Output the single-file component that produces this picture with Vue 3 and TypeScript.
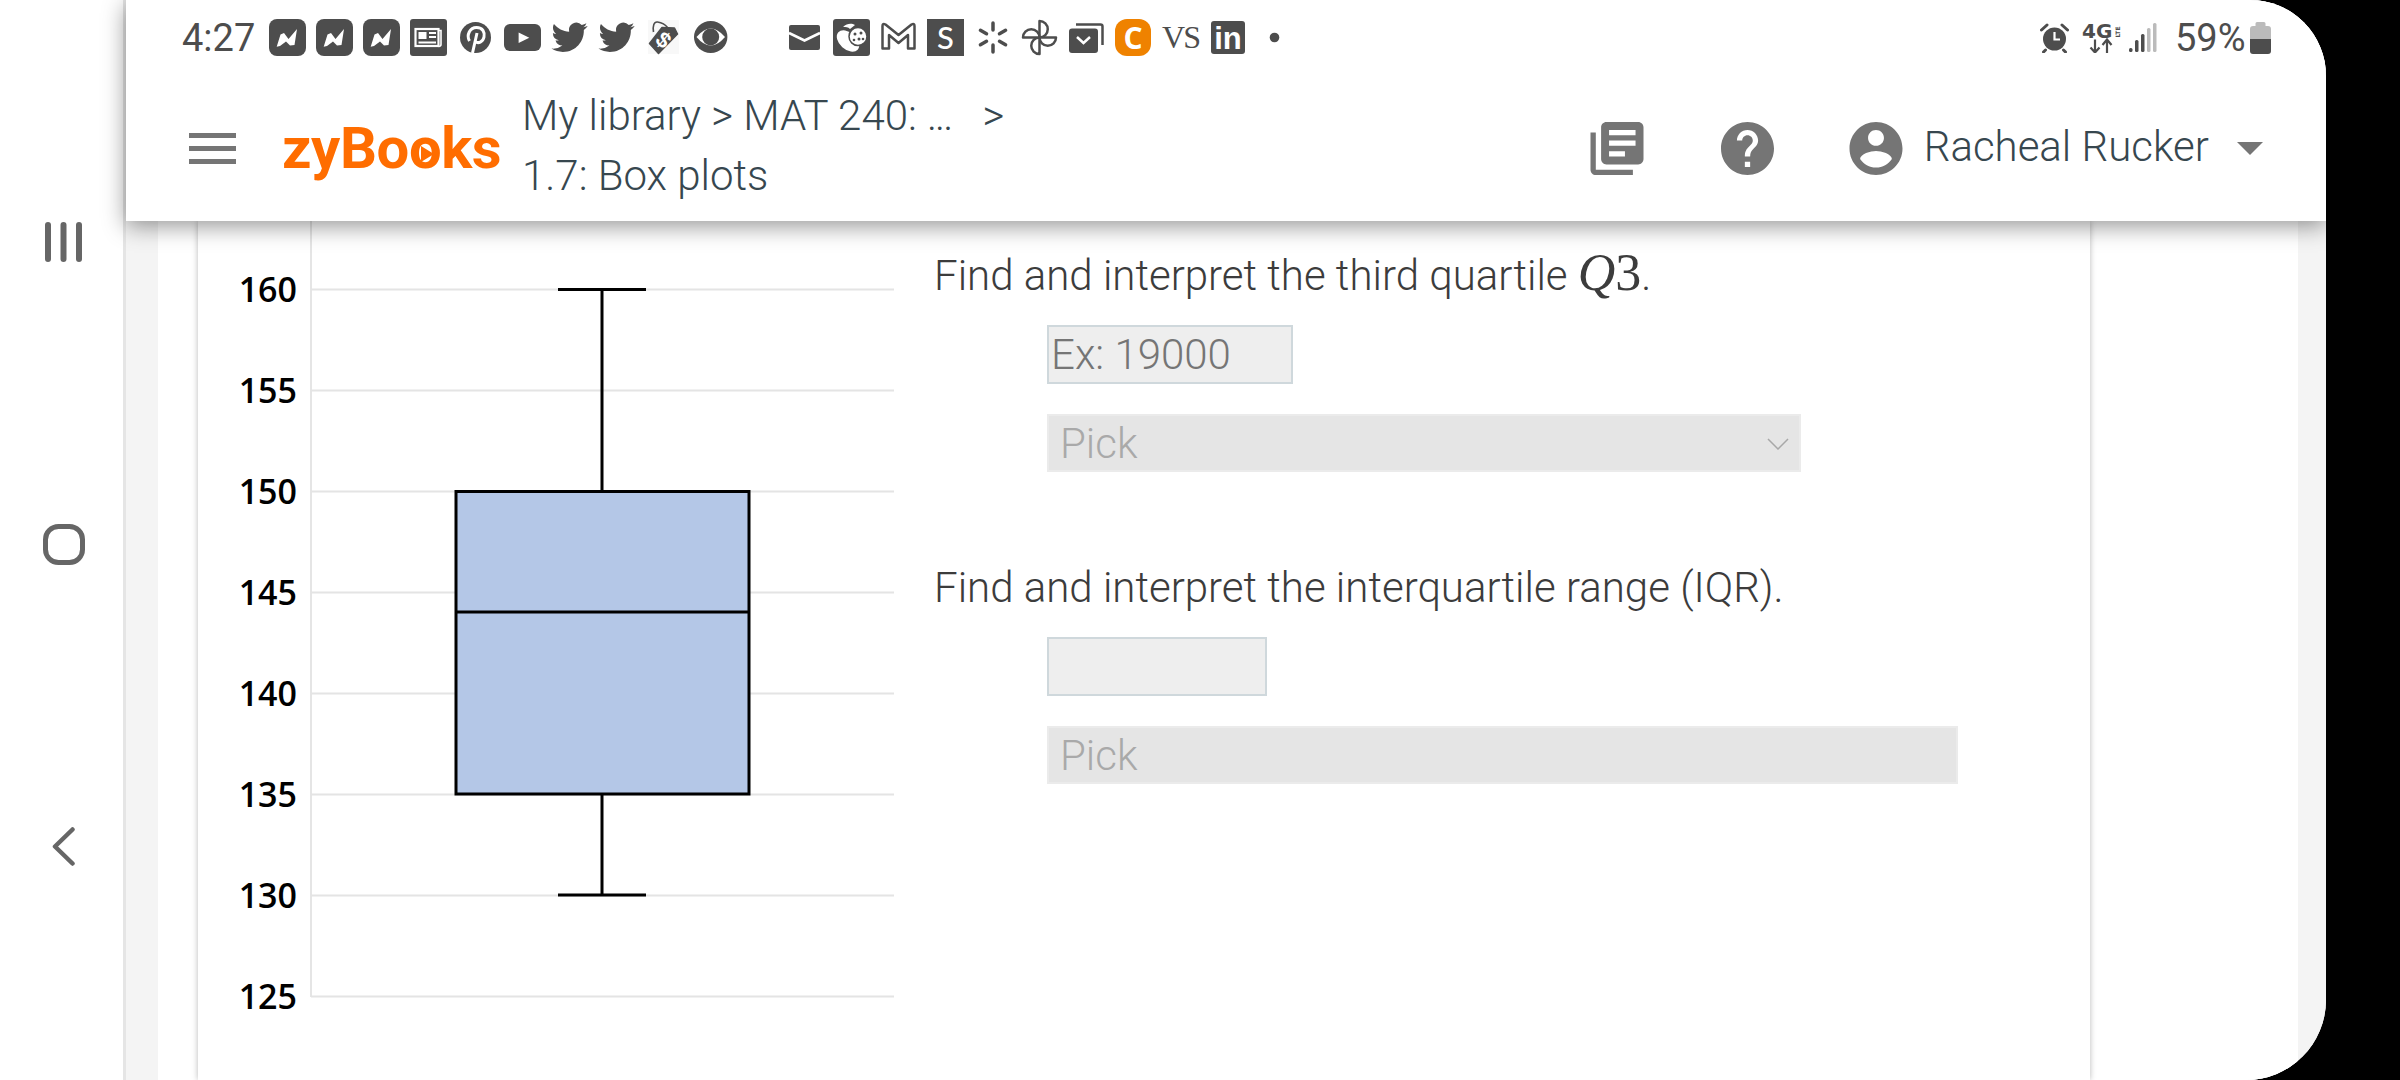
<script setup lang="ts">
// valores del eje y posicion vertical de cada linea de la grafica
const ticks = [160, 155, 150, 145, 140, 135, 130, 125].map((value, i) => ({
  value,
  y: 289.5 + i * 101,
}))

const sparkAngles = [0, 60, 120, 180, 240, 300]
const petalAngles = [0, 90, 180, 270]
const signalBars = [
  { x: 0, h: 4, on: true },
  { x: 6, h: 12, on: true },
  { x: 12, h: 18, on: true },
  { x: 18, h: 24, on: false },
  { x: 24, h: 29, on: false },
]
const twitterPath =
  'M23.953 4.57a10 10 0 01-2.825.775 4.958 4.958 0 002.163-2.723c-.951.555-2.005.959-3.127 1.184a4.92 4.92 0 00-8.384 4.482C7.69 8.095 4.067 6.13 1.64 3.162a4.822 4.822 0 00-.666 2.475c0 1.71.87 3.213 2.188 4.096a4.904 4.904 0 01-2.228-.616v.06a4.923 4.923 0 003.946 4.827 4.996 4.996 0 01-2.212.085 4.936 4.936 0 004.604 3.417 9.867 9.867 0 01-6.102 2.105c-.39 0-.779-.023-1.17-.067a13.995 13.995 0 007.557 2.209c9.053 0 13.998-7.496 13.998-13.985 0-.21 0-.42-.015-.63A9.935 9.935 0 0024 4.59z'
</script>

<template>
  <div class="device">
    <div class="screen">
      <!-- Barra de navegacion de Android -->
      <nav class="softkeys">
        <svg width="37" height="40" viewBox="0 0 37 40"><g fill="#666"><rect x="0" width="6" height="40" rx="3" /><rect x="15.5" width="6" height="40" rx="3" /><rect x="31" width="6" height="40" rx="3" /></g></svg>
        <svg width="42" height="41" viewBox="0 0 42 41"><rect x="2.5" y="2.5" width="37" height="36" rx="13" fill="none" stroke="#666" stroke-width="5" /></svg>
        <svg width="23" height="39" viewBox="0 0 23 39"><path d="M20.5 2.5 3 19.5 20.5 36.5" fill="none" stroke="#666" stroke-width="4.5" stroke-linecap="round" stroke-linejoin="round" /></svg>
      </nav>

      <main class="main">
        <header class="top">
          <div class="status">
            <span class="clock">4:27</span>
            <div class="notif">
              <svg v-for="n in 3" :key="n" class="slot" viewBox="0 0 47 47"><rect x="5" y="5" width="37" height="37" rx="8" /><polygon points="12.7,32.7 16.5,20.5 20,19 24.5,25 33,15 30.5,31 26,31.5 22,27.5 16,32" fill="#fff" /></svg>
              <svg class="slot" viewBox="0 0 47 47"><rect x="5" y="5" width="37" height="37" rx="3" /><rect x="10.5" y="15" width="23" height="17" fill="none" stroke="#fff" stroke-width="2.2" /><path d="M33.5 16.5h2.5v14q0 2-2.5 2" fill="none" stroke="#fff" stroke-width="1.6" /><rect x="13.5" y="18" width="8" height="7" fill="#fff" /><path d="M24 19h7M24 23h7M13.5 28.5h17.5" stroke="#fff" stroke-width="2" /></svg>
              <svg class="slot" viewBox="0 0 47 47"><circle cx="23.5" cy="23.5" r="15.5" /><path d="M17.5 27C14 21 18 13.5 24.5 13.5 31 13.5 33 18.5 32 23 31 28 26 30 23.5 27.5M25 19 20.5 39" fill="none" stroke="#fff" stroke-width="3" /></svg>
              <svg class="slot" viewBox="0 0 47 47"><rect x="5" y="10" width="37" height="27" rx="6" /><polygon points="19.6,18.5 30.3,23.7 19.6,29" fill="#fff" /></svg>
              <svg v-for="n in 2" :key="'tw' + n" class="slot" viewBox="0 0 47 47"><path :d="twitterPath" transform="translate(5.5 5.25) scale(1.5)" /></svg>
              <svg class="slot" viewBox="0 0 47 47"><rect x="8" y="6" width="31" height="34" fill="#f8f8f8" /><path d="M22 13.5 34.500 14 37.500 20 18.500 39.500 9.500 29.500Z" stroke="#4d4d4d" stroke-width="1.500" stroke-linejoin="round" /><path d="M13.500 18C12.500 12 14 7.500 17.500 8 21 8.500 25 10 27.500 13.500" fill="none" stroke="#4d4d4d" stroke-width="1.600" /><text x="22.500" y="33" class="tag-sign" transform="rotate(40 22.500 27)">$</text></svg>
              <svg class="slot" viewBox="0 0 47 47"><ellipse cx="23.7" cy="23" rx="16.7" ry="16" /><path d="M9.5 23Q23.7 6 38 23 23.7 40 9.5 23Z" fill="#fff" /><circle cx="23.7" cy="23" r="8.5" /></svg>
              <span class="slot"></span>
              <svg class="slot" viewBox="0 0 47 47"><rect x="8" y="11" width="31" height="25" rx="2" /><path d="M8 19 23.5 26.5 39 19" fill="none" stroke="#fff" stroke-width="2.5" /></svg>
              <svg class="slot" viewBox="0 0 47 47"><rect x="5" y="5" width="37" height="37" rx="3" /><ellipse cx="20" cy="27" rx="13" ry="8.5" transform="rotate(42 20 27)" fill="#fff" /><circle cx="30" cy="22.5" r="9" fill="#fff" stroke="#4d4d4d" stroke-width="1.5" /><g><circle cx="27" cy="20" r="1.5" /><circle cx="33" cy="19" r="1.5" /><circle cx="31" cy="25" r="1.5" /><circle cx="35" cy="25" r="1.3" /><circle cx="26" cy="26" r="1.3" /></g><path d="M15 13C19 9 24 9 27 11L22 15C20 13 18 13 15 13Z" fill="#fff" /></svg>
              <svg class="slot" viewBox="0 0 47 47"><path d="M7.5 34.5V12Q7.5 9 10.5 10.5L23.5 21 36.5 10.5Q39.5 9 39.5 12V34.5H33V21L23.5 29 14 21V34.5Z" fill="none" stroke="#4d4d4d" stroke-width="2.5" stroke-linejoin="round" /></svg>
              <svg class="slot" viewBox="0 0 47 47"><rect x="5" y="5" width="37" height="37" /><text x="23.5" y="35" class="s-letter">S</text></svg>
              <svg class="slot" viewBox="0 0 47 47"><line v-for="a in sparkAngles" :key="a" x1="24" y1="16" x2="24" y2="9" stroke="#4d4d4d" stroke-width="3.5" stroke-linecap="round" :transform="`rotate(${a} 24 23.5)`" /></svg>
              <svg class="slot" viewBox="0 0 47 47"><path v-for="a in petalAngles" :key="a" d="M23.5 23.5V7A8.25 8.25 0 0 1 23.5 23.5Z" fill="#fff" stroke="#4d4d4d" stroke-width="2.5" stroke-linejoin="round" :transform="`rotate(${a} 23.5 23.5)`" /></svg>
              <svg class="slot" viewBox="0 0 47 47"><path d="M13 10.5H37.5Q39.5 10.5 39.5 12.5V31" fill="none" stroke="#4d4d4d" stroke-width="2.5" /><rect x="6" y="14.5" width="29" height="24.5" rx="3" /><path d="M14 23 20.5 29 27 23" fill="none" stroke="#fff" stroke-width="2.5" /></svg>
              <svg class="slot" viewBox="0 0 47 47"><rect x="5" y="5" width="36" height="37" rx="12" fill="#ef8200" /><text x="23" y="35" class="c-letter">C</text></svg>
              <svg class="slot" viewBox="0 0 47 47"><text x="23.5" y="34" class="vs-letter">VS</text></svg>
              <svg class="slot" viewBox="0 0 47 47"><rect x="7" y="7" width="34" height="33" rx="3" /><text x="24" y="35" class="in-letter">in</text></svg>
              <svg class="slot" viewBox="0 0 47 47"><circle cx="23.5" cy="23.5" r="4.8" /></svg>
            </div>

            <div class="sys">
              <svg width="29" height="30" viewBox="0 0 29 30"><circle cx="14.5" cy="16" r="11.5" fill="#4d4d4d" /><path d="M14.5 9v7.5H20" fill="none" stroke="#fff" stroke-width="2.2" /><path d="M1.5 7 7 2M27.5 7 22 2M5.500 27 3.500 29M23.500 27 25.500 29" stroke="#4d4d4d" stroke-width="3" stroke-linecap="round" /></svg>
              <svg class="net" width="39" height="30" viewBox="0 0 39 30"><text x="0" y="15" class="net-4g">4G</text><text class="net-lte" transform="translate(38 14.5) rotate(-90)">LTE</text><path d="M13 16.5V29M8.5 24.5 13 29.5 17.5 24.5M25 30V17.5M20.5 22 25 16.5 29.5 22" fill="none" stroke="#4d4d4d" stroke-width="2.2" /></svg>
              <svg class="signal" width="28" height="29" viewBox="0 0 28 29"><rect v-for="b in signalBars" :key="b.x" :x="b.x" :y="29 - b.h" width="3.5" :height="b.h" rx="1.5" :fill="b.on ? '#4d4d4d' : '#bbb'" /></svg>
              <span class="battery-text">59%</span>
              <svg class="battery" width="21" height="32" viewBox="0 0 21 32"><path d="M5.5 1.5Q5.5 0 7 0H14Q15.5 0 15.5 1.5V4H18Q21 4 21 7V17H0V7Q0 4 3 4H5.5Z" fill="#bbb" /><path d="M0 17H21V29Q21 32 18 32H3Q0 32 0 29Z" fill="#4d4d4d" /></svg>
            </div>
          </div>

          <div class="toolbar">
            <svg class="burger" width="47" height="31" viewBox="0 0 47 31"><path d="M0 0H47V5H0ZM0 13H47V18H0ZM0 26H47V31H0Z" fill="#757575" /></svg>
            <div class="logo">zyBo<span class="play-o">o</span>ks</div>
            <div class="crumbs">
              <div>My library &gt; MAT 240: <span class="dots">...</span> <span class="crumb-sep">&gt;</span></div>
              <div>1.7: Box plots</div>
            </div>
            <div class="tools">
              <svg width="54" height="53" viewBox="2 2 20 20"><path fill="#757575" d="M4 6H2v14c0 1.1.9 2 2 2h14v-2H4V6zm16-4H8c-1.1 0-2 .9-2 2v12c0 1.1.9 2 2 2h12c1.1 0 2-.9 2-2V4c0-1.1-.9-2-2-2zm-1 9H9V9h10v2zm-4 4H9v-2h6v2zm4-8H9V5h10v2z" /></svg>
              <svg class="help" width="53" height="53" viewBox="2 2 20 20"><path fill="#757575" d="M12 2C6.48 2 2 6.48 2 12s4.48 10 10 10 10-4.48 10-10S17.52 2 12 2zm1 17h-2v-2h2v2zm2.07-7.75l-.9.92C13.45 12.9 13 13.5 13 15h-2v-.5c0-1.1.45-2.1 1.17-2.83l1.24-1.26c.37-.36.59-.86.59-1.41 0-1.1-.9-2-2-2s-2 .9-2 2H8c0-2.21 1.79-4 4-4s4 1.79 4 4c0 .88-.36 1.68-.93 2.25z" /></svg>
              <svg class="account" width="54" height="53" viewBox="2 2 20 20"><path fill="#757575" d="M12 2C6.48 2 2 6.48 2 12s4.48 10 10 10 10-4.48 10-10S17.52 2 12 2zm0 3c1.66 0 3 1.34 3 3s-1.34 3-3 3-3-1.34-3-3 1.34-3 3-3zm0 14.2c-2.5 0-4.71-1.28-6-3.22.03-1.99 4-3.08 6-3.08 1.99 0 5.97 1.09 6 3.08-1.29 1.94-3.5 3.22-6 3.22z" /></svg>
              <span class="user">Racheal Rucker</span>
              <svg class="caret" width="26" height="13" viewBox="0 0 26 13"><path d="M0 0H26L13 13Z" fill="#757575" /></svg>
            </div>
          </div>
        </header>

        <div class="page">
          <section class="card">
            <!-- Diagrama de caja -->
            <svg class="chart" width="700" height="859" viewBox="198 221 700 859">
              <line x1="311" y1="221" x2="311" y2="997" stroke="#dcdcdc" stroke-width="1.5" />
              <g v-for="t in ticks" :key="t.value">
                <line x1="311" :y1="t.y" x2="894" :y2="t.y" stroke="#e4e4e4" stroke-width="2" />
                <text x="297" :y="t.y + 12" class="tick">{{ t.value }}</text>
              </g>
              <g fill="none" stroke="#000" stroke-width="3">
                <path d="M558 289.5H646M602 289.5V491.5M602 794V895M558 895H646" />
                <rect x="456" y="491.5" width="293" height="302.5" fill="#b4c7e7" />
                <path d="M456 612H749" />
              </g>
            </svg>

            <div class="questions">
              <p class="prompt">Find and interpret the third quartile <span class="math"><i>Q</i>3</span>.</p>
              <input class="answer answer-wide" type="text" placeholder="Ex: 19000" disabled />
              <div class="pick pick-short">
                <select disabled><option>Pick</option></select>
                <svg class="chevron" width="22" height="12" viewBox="0 0 22 12"><path d="M1 1 11 11 21 1" fill="none" stroke="#a8a8a8" stroke-width="1.5" /></svg>
              </div>

              <p class="prompt prompt-next">Find and interpret the interquartile range (IQR).</p>
              <input class="answer answer-narrow" type="text" disabled />
              <div class="pick pick-long">
                <select disabled><option>Pick</option></select>
              </div>
            </div>
          </section>
        </div>
      </main>
    </div>
  </div>
</template>

<style>
body {
  background: #000;
}
</style>

<style scoped>
.device {
  width: 2400px;
  height: 1080px;
  background: #000;
  overflow: hidden;
  font-family: Roboto, "Liberation Sans", sans-serif;
}

.screen {
  width: 2326px;
  height: 1080px;
  display: flex;
  background: #fff;
  border-radius: 0 76px 80px 0;
  overflow: hidden;
}

/* barra lateral */
.softkeys {
  width: 119px;
  flex: none;
  border-right: 3px solid #e5e5e5;
  display: flex;
  flex-direction: column;
  align-items: center;
  padding: 222px 0 0 4px;
  gap: 262px;
  background: #fff;
}

.main {
  flex: 1;
  min-width: 0;
  display: flex;
  flex-direction: column;
  background: #f4f4f4;
}

.top {
  height: 221px;
  flex: none;
  background: #fff;
  position: relative;
  z-index: 2;
  box-shadow: 0 5px 22px rgba(0, 0, 0, 0.42);
}

/* barra de estado */
.status {
  height: 75px;
  display: flex;
  align-items: center;
  padding: 0 55px 0 56px;
}

.clock {
  font-size: 38px;
  color: #4d4d4d;
  width: 82px;
  flex: none;
}

.notif {
  display: flex;
  fill: #4d4d4d;
}

.slot {
  width: 47px;
  height: 47px;
  flex: none;
  display: block;
}

.tag-sign {
  font: 700 22px "Liberation Sans", sans-serif;
  fill: #fff;
  text-anchor: middle;
}

.s-letter {
  font: 500 31px Lato, sans-serif;
  fill: #fff;
  text-anchor: middle;
}

.c-letter {
  font: 700 30px "Open Sans", sans-serif;
  fill: #fff;
  text-anchor: middle;
}

.vs-letter {
  font: 400 32px "Liberation Serif", serif;
  text-anchor: middle;
  letter-spacing: -2px;
}

.in-letter {
  font: 700 31px "Liberation Sans", sans-serif;
  fill: #fff;
  text-anchor: middle;
}

.sys {
  margin-left: auto;
  display: flex;
  align-items: center;
}

.net {
  margin-left: 13px;
}

.net-4g {
  font: 700 20px "DejaVu Sans", sans-serif;
  fill: #4d4d4d;
}

.net-lte {
  font: 700 6px "DejaVu Sans", sans-serif;
  fill: #4d4d4d;
}

.signal {
  margin-left: 8px;
}

.battery-text {
  margin-left: 18px;
  font-size: 38px;
  color: #4d4d4d;
  width: 68px;
  white-space: nowrap;
}

.battery {
  margin-left: 7px;
}

/* encabezado */
.toolbar {
  height: 146px;
  display: flex;
  align-items: center;
  padding: 0 63px;
  color: #37474f;
  font-size: 42px;
  font-weight: 300;
}

.burger {
  flex: none;
  margin-right: 46px;
}

.logo {
  font-size: 58px;
  font-weight: 700;
  letter-spacing: -0.4px;
  color: #ff6d00;
  width: 240px;
  flex: none;
  white-space: nowrap;
}

.play-o {
  position: relative;
}

.play-o::after {
  content: "";
  position: absolute;
  left: 12px;
  top: 32px;
  border-left: 13px solid #ff6d00;
  border-top: 8px solid transparent;
  border-bottom: 8px solid transparent;
}

.crumbs {
  line-height: 60px;
  white-space: nowrap;
  padding-bottom: 4px;
}

.dots {
  letter-spacing: -2px;
}

.crumb-sep {
  margin-left: 21px;
}

.tools {
  margin-left: auto;
  display: flex;
  align-items: center;
}

.help {
  margin-left: 77px;
}

.account {
  margin-left: 75px;
}

.user {
  margin-left: 21px;
  margin-bottom: 4px;
  white-space: nowrap;
}

.caret {
  margin-left: 28px;
}

/* contenido */
.page {
  flex: 1;
  min-height: 0;
  margin: 0 28px 0 32px;
  padding-left: 40px;
  background: #fff;
  overflow: hidden;
}

.card {
  width: 1892px;
  height: 859px;
  display: flex;
  gap: 36px;
  background: #fff;
  box-shadow: 0 0 6px rgba(0, 0, 0, 0.28);
}

.chart {
  flex: none;
  display: block;
}

.tick {
  font: 600 34px "Open Sans", sans-serif;
  fill: #000;
  text-anchor: end;
}

.questions {
  padding-top: 25px;
  display: flex;
  flex-direction: column;
  align-items: flex-start;
  color: #3c3c3c;
  font-size: 42px;
  font-weight: 300;
}

.prompt {
  margin: 0;
  line-height: 60px;
  white-space: nowrap;
}

.prompt-next {
  margin-top: 86px;
}

.math {
  font-family: "Liberation Serif", serif;
  font-size: 52px;
  font-weight: 400;
  line-height: 40px;
}

.answer {
  margin: 19px 0 0 113px;
  height: 59px;
  box-sizing: border-box;
  border: 2px solid #cfd8dc;
  background: #eee;
  padding: 0 2px;
  font: 300 42px Roboto, sans-serif;
  color: #757575;
  border-radius: 0;
  outline: none;
}

.answer::placeholder {
  color: #757575;
  opacity: 1;
}

.answer-wide {
  width: 246px;
}

.answer-narrow {
  width: 220px;
}

.pick {
  position: relative;
  margin: 30px 0 0 113px;
  height: 58px;
}

.pick select {
  display: block;
  width: 100%;
  height: 100%;
  box-sizing: border-box;
  appearance: none;
  border: 2px solid #ebebeb;
  border-radius: 0;
  background: #e5e5e5;
  padding: 0 11px;
  font: 300 42px Roboto, sans-serif;
  color: #a9a9a9;
  opacity: 1;
}

.pick-short {
  width: 754px;
}

.pick-long {
  width: 911px;
}

.chevron {
  position: absolute;
  right: 12px;
  top: 24px;
}
</style>
